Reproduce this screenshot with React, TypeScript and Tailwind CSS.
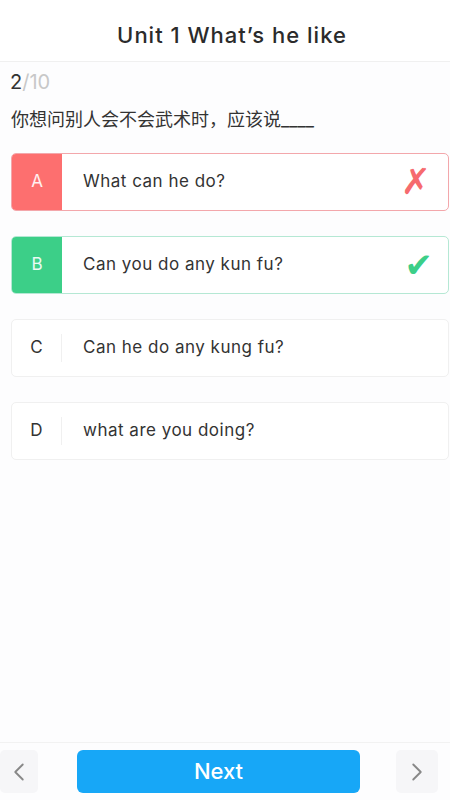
import { ChevronLeft, ChevronRight } from "lucide-react";

type Option = {
  key: string;
  text: string;
  state: "wrong" | "right" | "none";
};

const options: Option[] = [
  { key: "A", text: "What can he do?", state: "wrong" },
  { key: "B", text: "Can you do any kun fu?", state: "right" },
  { key: "C", text: "Can he do any kung fu?", state: "none" },
  { key: "D", text: "what are you doing?", state: "none" },
];

function OptionCard({ opt }: { opt: Option }) {
  const border =
    opt.state === "wrong"
      ? "border-[#f3a7ab]"
      : opt.state === "right"
      ? "border-[#b5e8d4]"
      : "border-[#f0f0f0]";
  const label =
    opt.state === "wrong"
      ? "bg-[#fd6f6f] text-white/90"
      : opt.state === "right"
      ? "bg-[#3ccf88] text-white/90"
      : "text-[#333]";

  return (
    <div className={`ml-[11px] mr-[1px] h-[58px] flex items-center rounded-[5px] border bg-white overflow-hidden ${border}`}>
      <div className={`w-[50px] h-full flex items-center justify-center text-[17px] ${label}`}>
        {opt.state === "none" ? (
          <div className="w-full h-full flex items-center">
            <span className="flex-1 text-center">{opt.key}</span>
            <span className="w-px h-[28px] bg-[#f0f0f0]" />
          </div>
        ) : (
          opt.key
        )}
      </div>
      <div className="flex-1 pl-[21px] text-[17px] tracking-[0.5px] text-[#333]">{opt.text}</div>
      {opt.state === "wrong" && (
        <span
          className="mr-[17px] text-[36px] leading-none text-[#f66b6e]"
          style={{ fontFamily: '"DejaVu Sans", sans-serif' }}
        >
          ✗
        </span>
      )}
      {opt.state === "right" && (
        <span
          className="mr-[15px] text-[34px] leading-none text-[#3ccf88]"
          style={{ fontFamily: '"DejaVu Sans", sans-serif' }}
        >
          ✔
        </span>
      )}
    </div>
  );
}

export default function App() {
  return (
    <div
      className="h-[800px] w-[450px] flex flex-col bg-[#fdfdfe]"
      style={{ fontFamily: 'Inter, "Noto Sans CJK SC", sans-serif' }}
    >
      {/* Header */}
      <div className="h-[62px] shrink-0 flex items-center justify-center border-b border-[#f0f0f0] bg-white pl-[14px]">
        <h1 className="text-[22px] font-medium tracking-[1px] text-[#2b2b2b] pt-[9px]">Unit 1 What’s he like</h1>
      </div>

      {/* Progress */}
      <div className="pl-[10px] pt-[5px] text-[20px] leading-[30px]">
        <span className="text-[#333]">2</span>
        <span className="text-[#c8c8c8]">/10</span>
      </div>

      {/* Question */}
      <div className="pl-[11px] pt-[11px] text-[18px] leading-[24px] text-[#333]">
        你想问别人会不会武术时，应该说____
      </div>

      {/* Options */}
      <div className="mt-[21px] flex flex-col gap-[25px]">
        {options.map((o) => (
          <OptionCard key={o.key} opt={o} />
        ))}
      </div>

      <div className="flex-1" />

      {/* Bottom bar */}
      <div className="h-[58px] shrink-0 border-t border-[#f2f2f2] flex items-start pt-[7px]">
        <div className="w-[38px] h-[43px] rounded-[5px] bg-[#f6f6f8] flex items-center justify-center">
          <ChevronLeft className="w-[30px] h-[30px] text-[#888]" strokeWidth={1.5} />
        </div>
        <button className="ml-[39px] w-[283px] h-[43px] rounded-[6px] bg-[#17a7f7] text-white text-[22px] font-medium">
          Next
        </button>
        <div className="ml-[36px] w-[42px] h-[43px] rounded-[5px] bg-[#f6f6f8] flex items-center justify-center">
          <ChevronRight className="w-[30px] h-[30px] text-[#888]" strokeWidth={1.5} />
        </div>
      </div>
    </div>
  );
}
